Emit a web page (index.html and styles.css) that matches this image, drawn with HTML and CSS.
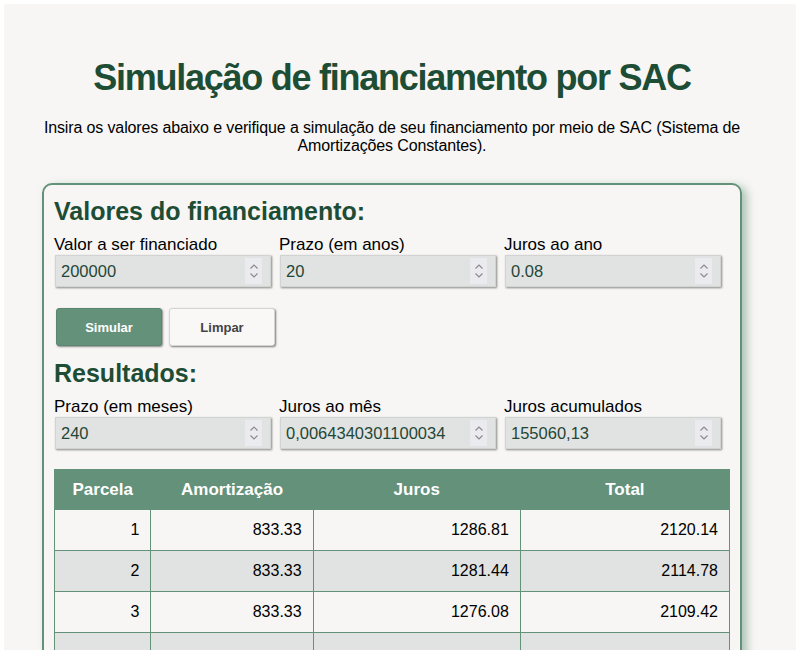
FILE: index.html
```html
<!DOCTYPE html>
<html lang="pt-BR">
<head>
<meta charset="utf-8">
<title>Simulação SAC</title>
<link rel="stylesheet" href="styles.css">
</head>
<body>
<div class="page">
  <h1 class="title">Simulação de financiamento por SAC</h1>
  <p class="intro">Insira os valores abaixo e verifique a simulação de seu financiamento por meio de SAC (Sistema de Amortizações Constantes).</p>
  <div class="card">
    <h2 class="section">Valores do financiamento:</h2>
    <div class="fields">
      <div class="field">
        <label class="label">Valor a ser financiado</label>
        <div class="input"><span class="value">200000</span><span class="spin"><svg width="10" height="16" viewBox="0 0 10 16"><path d="M1.5 5.5 L5 2 L8.5 5.5 M1.5 10.5 L5 14 L8.5 10.5" fill="none" stroke="#8a8a8f" stroke-width="1.2"/></svg></span></div>
      </div>
      <div class="field">
        <label class="label">Prazo (em anos)</label>
        <div class="input"><span class="value">20</span><span class="spin"><svg width="10" height="16" viewBox="0 0 10 16"><path d="M1.5 5.5 L5 2 L8.5 5.5 M1.5 10.5 L5 14 L8.5 10.5" fill="none" stroke="#8a8a8f" stroke-width="1.2"/></svg></span></div>
      </div>
      <div class="field">
        <label class="label">Juros ao ano</label>
        <div class="input"><span class="value">0.08</span><span class="spin"><svg width="10" height="16" viewBox="0 0 10 16"><path d="M1.5 5.5 L5 2 L8.5 5.5 M1.5 10.5 L5 14 L8.5 10.5" fill="none" stroke="#8a8a8f" stroke-width="1.2"/></svg></span></div>
      </div>
    </div>
    <div class="buttons">
      <button class="btn primary">Simular</button>
      <button class="btn secondary">Limpar</button>
    </div>
    <h2 class="section results">Resultados:</h2>
    <div class="fields results-fields">
      <div class="field">
        <label class="label">Prazo (em meses)</label>
        <div class="input"><span class="value">240</span><span class="spin"><svg width="10" height="16" viewBox="0 0 10 16"><path d="M1.5 5.5 L5 2 L8.5 5.5 M1.5 10.5 L5 14 L8.5 10.5" fill="none" stroke="#8a8a8f" stroke-width="1.2"/></svg></span></div>
      </div>
      <div class="field">
        <label class="label">Juros ao mês</label>
        <div class="input"><span class="value">0,0064340301100034</span><span class="spin"><svg width="10" height="16" viewBox="0 0 10 16"><path d="M1.5 5.5 L5 2 L8.5 5.5 M1.5 10.5 L5 14 L8.5 10.5" fill="none" stroke="#8a8a8f" stroke-width="1.2"/></svg></span></div>
      </div>
      <div class="field">
        <label class="label">Juros acumulados</label>
        <div class="input"><span class="value">155060,13</span><span class="spin"><svg width="10" height="16" viewBox="0 0 10 16"><path d="M1.5 5.5 L5 2 L8.5 5.5 M1.5 10.5 L5 14 L8.5 10.5" fill="none" stroke="#8a8a8f" stroke-width="1.2"/></svg></span></div>
      </div>
    </div>
    <table class="table">
      <thead>
        <tr><th class="c1">Parcela</th><th class="c2">Amortização</th><th class="c3">Juros</th><th class="c4">Total</th></tr>
      </thead>
      <tbody>
        <tr><td>1</td><td>833.33</td><td>1286.81</td><td>2120.14</td></tr>
        <tr><td>2</td><td>833.33</td><td>1281.44</td><td>2114.78</td></tr>
        <tr><td>3</td><td>833.33</td><td>1276.08</td><td>2109.42</td></tr>
        <tr class="cut"><td></td><td></td><td></td><td></td></tr>
      </tbody>
    </table>
  </div>
</div>
</body>
</html>
```

FILE: styles.css
```css
html, body {
  margin: 0;
  padding: 0;
  background: #ffffff;
}
body {
  font-family: "Liberation Sans", Arial, sans-serif;
  color: #000;
}
.page {
  width: 792px;
  margin: 4px auto 0;
  box-sizing: border-box;
  padding: 1px 16px 40px 0;
  background: #f7f6f4;
  min-height: 700px;
}
.title {
  margin: 52px 0 0;
  text-align: center;
  font-size: 36px;
  font-weight: bold;
  letter-spacing: -1.25px;
  color: #1e4d35;
  line-height: 42px;
}
.intro {
  margin: 20px auto 0;
  width: 720px;
  text-align: center;
  font-size: 16px;
  letter-spacing: -0.13px;
  line-height: 18px;
}
.card {
  width: 700px;
  box-sizing: border-box;
  margin: 28px auto 0;
  border: 2px solid #64917a;
  border-radius: 10px;
  padding: 10px 10px 20px;
  box-shadow: 5px 3px 8px rgba(100, 145, 122, 0.5);
}
.section {
  margin: 1px 0 0;
  font-size: 25px;
  line-height: 30px;
  color: #1e4d35;
  font-weight: bold;
}
.section.results {
  margin-top: 12px;
}
.fields {
  display: grid;
  grid-template-columns: 225px 225px 225px;
  margin-top: 9px;
}
.results-fields {
  margin-top: 9px;
}
.field {
  display: flex;
  flex-direction: column;
}
.label {
  font-size: 17px;
  line-height: 20px;
}
.input {
  display: flex;
  align-items: center;
  justify-content: space-between;
  width: 216px;
  height: 32px;
  box-sizing: border-box;
  margin-top: 0;
  margin-left: 1px;
  padding: 0 8px 0 5px;
  background: #e1e3e2;
  border: 1px solid #d2d4d3;
  box-shadow: 1px 1px 2px rgba(0, 0, 0, 0.45);
  font-size: 16.5px;
  color: #1f4737;
}
.spin {
  display: flex;
  align-items: center;
  justify-content: center;
  width: 17px;
  height: 26px;
  background: #ebebef;
}
.buttons {
  display: flex;
  gap: 7px;
  margin-top: 21px;
  padding-left: 2px;
}
.btn {
  width: 106px;
  height: 38px;
  border-radius: 3px;
  font-family: "Liberation Sans", Arial, sans-serif;
  font-size: 13px;
  font-weight: bold;
  cursor: pointer;
}
.primary {
  background: #64917a;
  color: #ffffff;
  border: 1px solid #5a8670;
  box-shadow: 1px 1px 2px rgba(0, 0, 0, 0.45);
}
.secondary {
  background: #f9f8f7;
  color: #444;
  border: 1px solid #d4d4d4;
  box-shadow: 1px 1px 2px rgba(0, 0, 0, 0.5);
}
.table {
  margin-top: 20px;
  width: 676px;
  border-collapse: collapse;
  font-size: 16px;
}
.table th {
  background: #64917a;
  color: #ffffff;
  font-weight: bold;
  font-size: 17px;
  height: 39px;
  padding: 0;
  text-align: center;
  border: 1px solid #64917a;
}
.c1 { width: 96px; }
.c2 { width: 162px; }
.c3 { width: 208px; }
.c4 { width: 210px; }
.table td {
  height: 40px;
  padding: 0 11px;
  text-align: right;
  border: 1px solid #64917a;
  background: #f7f6f4;
}
.table tbody tr:nth-child(even) td {
  background: #e1e3e2;
}
```
